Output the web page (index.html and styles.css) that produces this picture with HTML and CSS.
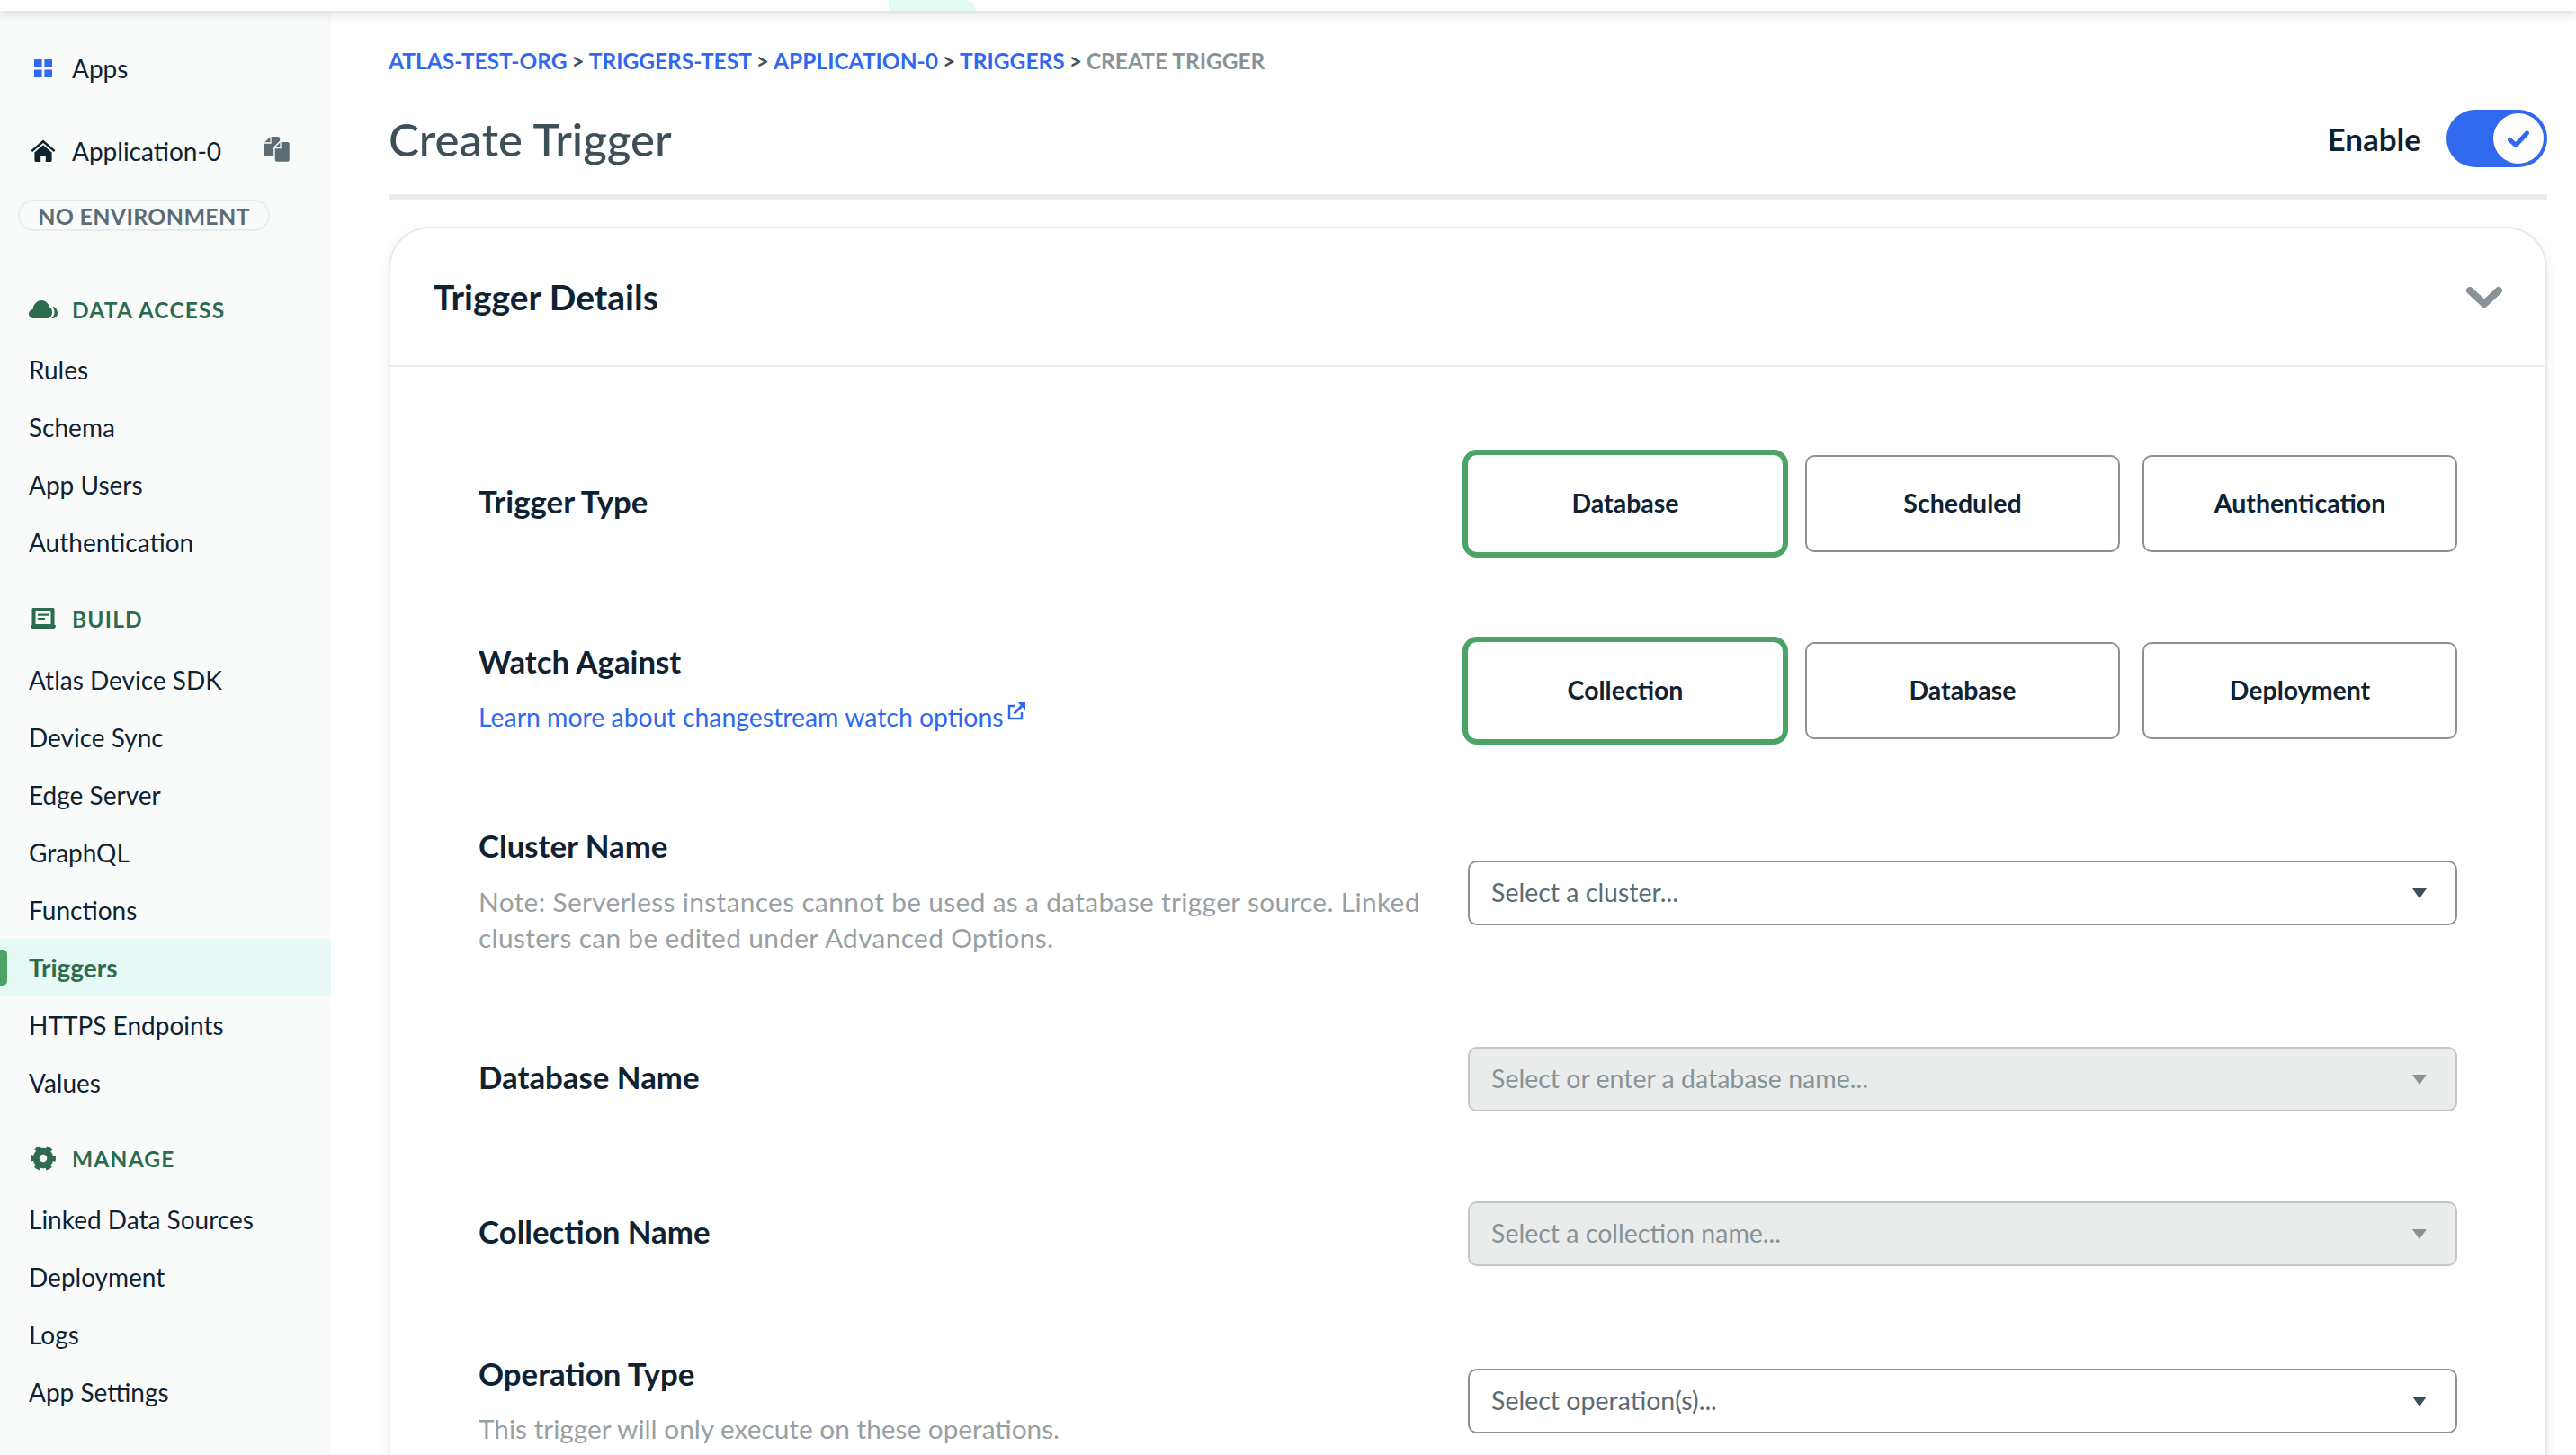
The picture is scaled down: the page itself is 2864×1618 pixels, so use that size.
FILE: index.html
```html
<!DOCTYPE html>
<html lang="en">
<head>
<meta charset="utf-8">
<title>Create Trigger</title>
<link rel="stylesheet" href="styles.css">
</head>
<body>
<header class="topbar"><div class="toptab"></div></header>
<div class="layout">
  <nav class="sidebar">
    <div class="nav-row app-row">
      <svg class="ico" viewBox="0 0 28 28"><path fill="#3069EE" d="M4 4h8.600v8.600H4zM15.400 4H24v8.600h-8.600zM4 15.400h8.600V24H4zM15.400 15.400H24V24h-8.600z"/></svg>
      <span>Apps</span>
    </div>
    <div class="nav-row app-row app-name">
      <svg class="ico" viewBox="0 0 28 28"><path fill="#0F2231" d="M14 1.500 0.500 13.200l1.600 1.900L14 5l11.900 10.100 1.600-1.900z"/><path fill="#0F2231" d="M14 7.200 4.400 15.400v9.200c0 .9.600 1.400 1.400 1.400h5.400v-7h5.600v7h5.400c.8 0 1.400-.5 1.400-1.400v-9.200z"/></svg>
      <span class="app-text">Application-0</span>
      <svg class="copy" viewBox="0 0 28 28">
        <path fill="#5C6C75" d="M6.500 0H15c1.300 0 2.200.9 2.200 2.200V22H2.200C.9 22 0 21.100 0 19.800V6.500z"/>
        <path fill="none" stroke="#F9FBFA" stroke-width="1.300" d="M7 0v7H0"/>
        <path fill="#5C6C75" stroke="#F9FBFA" stroke-width="1.500" d="M17.500 5.200H26c1.300 0 2.500 1 2.500 2.300V26c0 1.300-1.200 2.500-2.500 2.500H13.500c-1.300 0-2.500-1.200-2.500-2.500V11.700z"/>
        <path fill="none" stroke="#F9FBFA" stroke-width="1.300" d="M18 5.500v7h-7"/>
      </svg>
    </div>
    <div class="env-pill">NO ENVIRONMENT</div>

    <div class="nav-head head-first">
      <svg class="ico ico-cloud" viewBox="0 0 32 20"><path fill="#2D6B4F" d="M6 20C2.500 20 0 18 0 15c0-2.700 1.800-4.600 4.500-5C5 4.500 9.200 0 14 0c4.500 0 8 3.200 9 7.500 2 1 3 3.300 3 6 0 2.800-1.400 5.200-3.800 6.500z"/><path fill="#2D6B4F" d="M26.500 6.500C30 8 32 10.700 32 14c0 3-2 6-5.500 6h-1.500c2.300-1.500 3.500-4 3.500-6.800 0-2.300-.8-4.700-2-6.700z"/></svg>
      <span>DATA ACCESS</span>
    </div>
    <a class="nav-item">Rules</a>
    <a class="nav-item">Schema</a>
    <a class="nav-item">App Users</a>
    <a class="nav-item">Authentication</a>

    <div class="nav-head">
      <svg class="ico" viewBox="0 0 28 24"><path fill="#2D6B4F" fill-rule="evenodd" d="M3 0h22c.8 0 1.500.7 1.500 1.500V19H28c0 2.500-.8 4-2.500 4h-23C.8 23 0 21.500 0 19h1.500V1.500C1.500.7 2.200 0 3 0zm2.500 3.500V18h17V3.500z"/><path fill="#2D6B4F" d="M8 6.500h12v2.300H8zM8 11h8v2.300H8z"/></svg>
      <span>BUILD</span>
    </div>
    <a class="nav-item">Atlas Device SDK</a>
    <a class="nav-item">Device Sync</a>
    <a class="nav-item">Edge Server</a>
    <a class="nav-item">GraphQL</a>
    <a class="nav-item">Functions</a>
    <a class="nav-item active">Triggers</a>
    <a class="nav-item">HTTPS Endpoints</a>
    <a class="nav-item">Values</a>

    <div class="nav-head head-last">
      <svg class="ico" viewBox="0 0 28 28"><circle cx="14" cy="14" r="7.800" fill="none" stroke="#2D6B4F" stroke-width="7"/><circle cx="14" cy="14" r="12" fill="none" stroke="#2D6B4F" stroke-width="4" stroke-dasharray="6.500 6.070" stroke-dashoffset="3.250"/></svg>
      <span>MANAGE</span>
    </div>
    <a class="nav-item">Linked Data Sources</a>
    <a class="nav-item">Deployment</a>
    <a class="nav-item">Logs</a>
    <a class="nav-item">App Settings</a>
  </nav>

  <main class="main">
    <div class="crumbs">
      <a>ATLAS-TEST-ORG</a><i>&gt;</i><a>TRIGGERS-TEST</a><i>&gt;</i><a>APPLICATION-0</a><i>&gt;</i><a>TRIGGERS</a><i>&gt;</i><span>CREATE TRIGGER</span>
    </div>
    <div class="title-row">
      <h1>Create Trigger</h1>
      <div class="enable">
        <span>Enable</span>
        <div class="toggle">
          <div class="knob">
            <svg viewBox="0 0 24 20" class="check"><path fill="none" stroke="#3069EE" stroke-width="5" stroke-linecap="round" stroke-linejoin="round" d="M2.500 10.500 9 16.500 21.500 3"/></svg>
          </div>
        </div>
      </div>
    </div>

    <section class="card">
      <div class="card-head">
        <h2>Trigger Details</h2>
        <svg class="chev" viewBox="0 0 40 26"><path fill="none" stroke="#889397" stroke-width="8" stroke-linecap="round" stroke-linejoin="miter" d="M4 6l16 15L36 6"/></svg>
      </div>
      <div class="form">
        <div class="row row-type">
          <div class="label-col center"><h3>Trigger Type</h3></div>
          <div class="choices">
            <button class="choice selected">Database</button>
            <button class="choice">Scheduled</button>
            <button class="choice">Authentication</button>
          </div>
        </div>
        <div class="row row-watch">
          <div class="label-col">
            <h3>Watch Against</h3>
            <p class="link-line"><a class="link">Learn more about changestream watch options</a><svg class="ext" viewBox="0 0 20 20"><path fill="none" stroke="#3069EE" stroke-width="2.400" d="M9 4H2v14h14v-7"/><path fill="none" stroke="#3069EE" stroke-width="3" d="M7.500 12.500 17 3"/><path fill="#3069EE" d="M11.500 0H20v8.500z"/></svg></p>
          </div>
          <div class="choices">
            <button class="choice selected">Collection</button>
            <button class="choice">Database</button>
            <button class="choice">Deployment</button>
          </div>
        </div>
        <div class="row row-cluster">
          <div class="label-col">
            <h3>Cluster Name</h3>
            <p class="note note-long">Note: Serverless instances cannot be used as a database trigger source. Linked clusters can be edited under Advanced Options.</p>
          </div>
          <div class="select"><span>Select a cluster...</span><b class="caret"></b></div>
        </div>
        <div class="row row-db">
          <div class="label-col center"><h3>Database Name</h3></div>
          <div class="select disabled"><span>Select or enter a database name...</span><b class="caret"></b></div>
        </div>
        <div class="row row-coll">
          <div class="label-col center"><h3>Collection Name</h3></div>
          <div class="select disabled"><span>Select a collection name...</span><b class="caret"></b></div>
        </div>
        <div class="row row-op">
          <div class="label-col">
            <h3>Operation Type</h3>
            <p class="note note-op">This trigger will only execute on these operations.</p>
          </div>
          <div class="select"><span>Select operation(s)...</span><b class="caret"></b></div>
        </div>
      </div>
    </section>
  </main>
</div>
</body>
</html>
```
FILE: styles.css
```css
* { box-sizing: border-box; }
html, body { margin: 0; height: 1618px; overflow: hidden; background: #fff; }
body { font-family: Lato, "Noto Sans", sans-serif; color: #0F2231; display: flex; flex-direction: column; }

.topbar { height: 12px; background: #fff; box-shadow: 0 2px 12px rgba(40, 50, 60, .22); position: relative; z-index: 2; flex: none; }
.toptab { margin-left: 988px; width: 97px; height: 12px; background: #E3F9F4; border-top-right-radius: 20px; }

.layout { flex: 1; display: flex; min-height: 0; }

.sidebar { width: 368px; flex: none; background: #F9FBFA; padding-top: 32px; font-size: 28px; }
.ico { width: 28px; height: 28px; flex: none; margin-left: 34px; }
.ico-cloud { width: 32px; height: 20px; margin: 0 -2px 0 32px; }
.nav-row { height: 64px; display: flex; align-items: center; gap: 18px; }
.app-name { margin-top: 28px; }
.app-text { width: 196px; }
.copy { width: 28px; height: 28px; flex: none; margin-top: -4px; }
.env-pill { margin: 22px 0 0 20px; width: 280px; height: 35px; border: 2px solid #E9ECEB; border-radius: 18px; display: flex; align-items: center; justify-content: center; font-size: 25px; font-weight: 700; letter-spacing: .3px; color: #5C6C75; }
.nav-head { height: 64px; margin-top: 21px; display: flex; align-items: center; gap: 18px; color: #2D6B4F; font-size: 24.500px; font-weight: 700; letter-spacing: 1.200px; }
.head-first { margin-top: 55px; margin-bottom: 3px; }
.head-last { margin-top: 20px; }
.nav-head + .nav-item { margin-top: 4px; }
.head-first + .nav-item { margin-top: 0; }
.nav-item { display: flex; align-items: center; height: 64px; padding-left: 32px; position: relative; }
.nav-item.active { background: #E6F9F6; color: #2D6B4F; font-weight: 700; }
.nav-item.active::before { content: ""; position: absolute; left: 0; top: 12px; width: 8px; height: 40px; background: #4BA366; border-radius: 0 5px 5px 0; }

.main { flex: 1; padding: 35px 32px 0 64px; min-width: 0; }
.crumbs { height: 40px; display: flex; align-items: center; font-size: 24.500px; font-weight: 700; color: #889397; }
.crumbs a { color: #3069EE; }
.crumbs i { font-style: normal; color: #3D4F58; margin: 0 5px; }
.title-row { margin-top: 35px; height: 100px; border-bottom: 6px solid #E9ECEB; padding-bottom: 30px; display: flex; justify-content: space-between; align-items: center; }
h1 { margin: 0; font-size: 51px; font-weight: 500; color: #3D4F58; }
.enable { display: flex; align-items: center; gap: 28px; font-size: 35px; font-weight: 700; }
.toggle { width: 112px; height: 64px; background: #3069EE; border-radius: 32px; padding: 4px; display: flex; justify-content: flex-end; }
.knob { width: 56px; height: 56px; background: #fff; border-radius: 50%; display: flex; align-items: center; justify-content: center; }
.check { width: 24px; height: 20px; margin-top: 1px; }

.card { margin-top: 30px; border: 2px solid #E9ECEB; border-bottom: 0; border-radius: 46px 46px 0 0; background: #fff; box-shadow: 0 4px 12px rgba(30, 50, 50, .08); }
.card-head { height: 154px; border-bottom: 2px solid #E9ECEB; padding: 0 48px; display: flex; align-items: center; justify-content: space-between; }
h2 { margin: 0; font-size: 39px; font-weight: 700; }
.chev { width: 40px; height: 26px; }

.form { padding: 98px 98px 80px; }
.row { display: grid; grid-template-columns: 1fr 1100px; align-items: start; }
.row-watch { margin-top: 100px; }
.row-cluster { margin-top: 97px; }
.row-db { margin-top: 101px; }
.row-coll { margin-top: 100px; }
.row-op { margin-top: 98px; }
.label-col.center { align-self: center; padding-bottom: 4px; }
h3 { margin: 0; font-size: 34.800px; font-weight: 700; line-height: 44px; }
.label-col p { margin: 0; }
.link-line { padding-top: 19px; line-height: 40px; display: flex; align-items: flex-start; font-size: 28.400px; }
.link { color: #3069EE; }
.ext { width: 20px; height: 20px; margin: 4px 0 0 4px; }
.note { color: #999FA3; line-height: 40px; padding-top: 20px; width: 1060px; font-size: 29.800px; }
.label-col .note-long { letter-spacing: .36px; }
.label-col .note-op { padding-top: 19px; }
.row-cluster .select { margin-top: 38px; }
.row-op .select { margin-top: 16px; }

.choices { display: flex; gap: 25px; }
.choice { width: 350px; height: 108px; background: #fff; border: 2px solid #889397; border-radius: 10px; font: 700 28.500px Lato, "Noto Sans", sans-serif; color: #0F2231; padding: 0 0 3px; }
.choice.selected { border-color: transparent; outline: 6px solid #4BA366; outline-offset: 0; border-radius: 10px; }

.select { height: 72px; border: 2px solid #889397; border-radius: 10px; padding: 0 24px 2px; display: flex; align-items: center; justify-content: space-between; font-size: 28.500px; color: #5C6C75; background: #fff; }
.caret { width: 0; height: 0; border-left: 8px solid transparent; border-right: 8px solid transparent; border-top: 11px solid #3D4F58; margin: 2px 8px 0 0; }
.select.disabled { background: #E9ECEB; border-color: #C1C7C6; color: #889397; }
.select.disabled .caret { border-top-color: #889397; }
```
